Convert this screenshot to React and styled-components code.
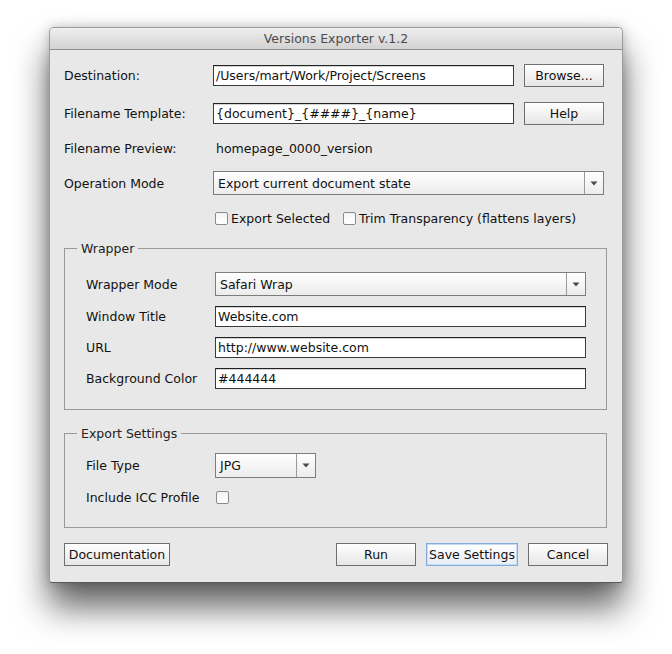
import React from 'react';
import styled, { createGlobalStyle } from 'styled-components';

const GlobalStyle = createGlobalStyle`
  html, body {
    margin: 0;
    padding: 0;
    background: #ffffff;
  }
  body {
    font-family: 'DejaVu Sans', 'Liberation Sans', sans-serif;
    font-size: 12.5px;
    color: #111;
  }
`;

function Select({ value, width }) {
  return (
    <SelectBox $width={width}>
      <SelectValue>{value}</SelectValue>
      <SelectArrow>
        <svg width="8" height="5" viewBox="0 0 8 5">
          <path d="M0.5 0.5 L7.5 0.5 L4 4.5 Z" fill="#4a4a4a" />
        </svg>
      </SelectArrow>
    </SelectBox>
  );
}

function Check({ label }) {
  return (
    <CheckLabel>
      <CheckBox />
      {label && <span>{label}</span>}
    </CheckLabel>
  );
}

export default function App() {
  return (
    <Page>
      <GlobalStyle />
      <Window>
        <TitleBar>Versions Exporter v.1.2</TitleBar>
        <Body>
          <Row $h={23}>
            <Label>Destination:</Label>
            <TextField>/Users/mart/Work/Project/Screens</TextField>
            <Button $w={80} $side>Browse...</Button>
          </Row>
          <Row $h={23} $mt={15}>
            <Label>Filename Template:</Label>
            <TextField>{'{document}_{####}_{name}'}</TextField>
            <Button $w={80} $side>Help</Button>
          </Row>
          <Row $h={20} $mt={13}>
            <Label>Filename Preview:</Label>
            <Value>homepage_0000_version</Value>
          </Row>
          <Row $h={24} $mt={13}>
            <Label>Operation Mode</Label>
            <Select value="Export current document state" />
          </Row>
          <Row $h={16} $mt={15}>
            <Label />
            <CheckGroup>
              <Check label="Export Selected" />
              <Check label="Trim Transparency (flattens layers)" />
            </CheckGroup>
          </Row>

          <Group $mt={15} $pt={16} $pb={20}>
            <Legend>Wrapper</Legend>
            <Row $h={24} $inner>
              <Label $w={129}>Wrapper Mode</Label>
              <Select value="Safari Wrap" />
            </Row>
            <Row $h={21} $mt={10} $inner>
              <Label $w={129}>Window Title</Label>
              <TextField>Website.com</TextField>
            </Row>
            <Row $h={21} $mt={10} $inner>
              <Label $w={129}>URL</Label>
              <TextField>http://www.website.com</TextField>
            </Row>
            <Row $h={21} $mt={10} $inner>
              <Label $w={129}>Background Color</Label>
              <TextField>#444444</TextField>
            </Row>
          </Group>

          <Group $mt={16} $pt={12} $pb={23}>
            <Legend>Export Settings</Legend>
            <Row $h={25} $inner>
              <Label $w={129}>File Type</Label>
              <Select value="JPG" width={101} />
            </Row>
            <Row $h={14} $mt={12} $inner>
              <Label $w={129}>Include ICC Profile</Label>
              <Check />
            </Row>
          </Group>

          <Footer>
            <Button $w={106}>Documentation</Button>
            <FooterRight>
              <Button $w={80}>Run</Button>
              <Button $w={92} $focus>Save Settings</Button>
              <Button $w={80}>Cancel</Button>
            </FooterRight>
          </Footer>
        </Body>
      </Window>
    </Page>
  );
}

const Page = styled.div`
  padding: 27px 0 60px 49px;
`;

const Window = styled.div`
  width: 574px;
  height: 556px;
  box-sizing: border-box;
  background: #e8e8e8;
  border: 1px solid #9c9c9c;
  border-bottom-color: #5a5a5a;
  border-radius: 5px 5px 3px 3px;
  box-shadow: 0 24px 34px rgba(0, 0, 0, 0.62), 0 0 12px rgba(0, 0, 0, 0.22);
  overflow: hidden;
`;

const TitleBar = styled.div`
  height: 21px;
  line-height: 21px;
  text-align: center;
  color: #4a4a4a;
  font-size: 12.5px;
  background: linear-gradient(#efefef, #d2d2d2);
  border-bottom: 1px solid #8e8e8e;
`;

const Body = styled.div`
  padding: 14px 15px 0 14px;
  display: flex;
  flex-direction: column;
`;

const Row = styled.div`
  display: flex;
  align-items: center;
  height: ${p => p.$h}px;
  margin-top: ${p => p.$mt || 0}px;
  margin-right: ${p => (p.$inner ? 0 : 3)}px;
`;

const Label = styled.div`
  width: ${p => p.$w || 149}px;
  flex: none;
  color: #111;
  white-space: nowrap;
`;

const Value = styled.div`
  padding-left: 3px;
  color: #111;
`;

const TextField = styled.div`
  flex: 1;
  height: 21px;
  box-sizing: border-box;
  background: #fff;
  border: 1px solid #3a3a3a;
  border-top-color: #222;
  box-shadow: inset 0 1px 0 #d4d4d4;
  padding: 0 2px;
  line-height: 19px;
  color: #111;
  white-space: nowrap;
  overflow: hidden;
`;

const Button = styled.div`
  width: ${p => p.$w}px;
  height: 23px;
  box-sizing: border-box;
  margin-left: ${p => (p.$side ? 10 : 0)}px;
  border: 1px solid ${p => (p.$focus ? '#86abe0' : '#6f6f6f')};
  background: ${p => (p.$focus ? 'linear-gradient(#ffffff, #e9eef5)' : 'linear-gradient(#ffffff, #e6e6e6)')};
  box-shadow: ${p => (p.$focus ? 'inset 0 0 0 1px #c6dbf6' : 'none')};
  display: flex;
  align-items: center;
  justify-content: center;
  color: #111;
  white-space: nowrap;
`;

const SelectBox = styled.div`
  ${p => (p.$width ? `width: ${p.$width}px;` : 'flex: 1;')}
  height: 100%;
  box-sizing: border-box;
  display: flex;
  border: 1px solid #7d7d7d;
  background: linear-gradient(#ffffff, #ececec);
`;

const SelectValue = styled.div`
  flex: 1;
  display: flex;
  align-items: center;
  padding-left: 4px;
  color: #111;
  white-space: nowrap;
`;

const SelectArrow = styled.div`
  width: 18px;
  border-left: 1px solid #9a9a9a;
  display: flex;
  align-items: center;
  justify-content: center;
`;

const CheckGroup = styled.div`
  display: flex;
  gap: 12px;
  padding-left: 1px;
`;

const CheckLabel = styled.div`
  display: flex;
  align-items: center;
  gap: 3px;
  color: #111;
  white-space: nowrap;
  padding-left: 1px;
`;

const CheckBox = styled.span`
  width: 13px;
  height: 13px;
  box-sizing: border-box;
  border: 1px solid #8a8a8a;
  border-radius: 2px;
  background: linear-gradient(#f4f4f4, #ffffff);
  flex: none;
`;

const Group = styled.fieldset`
  margin: ${p => p.$mt}px 0 0 0;
  padding: ${p => p.$pt}px 20px ${p => p.$pb}px 21px;
  border: 1px solid #999;
  min-width: 0;
`;

const Legend = styled.legend`
  margin-left: -9px;
  padding: 0 4px;
  color: #222;
  line-height: 15px;
`;

const Footer = styled.div`
  display: flex;
  justify-content: space-between;
  margin-top: 15px;
  margin-right: -1px;
`;

const FooterRight = styled.div`
  display: flex;
  gap: 10px;
`;
